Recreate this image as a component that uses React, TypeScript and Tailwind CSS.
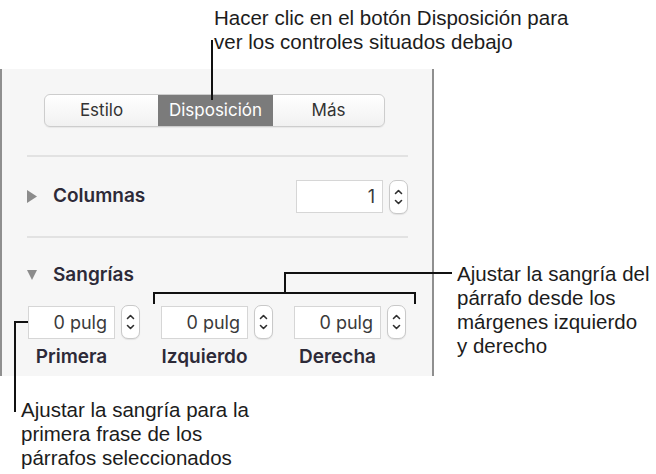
import React from "react";

const callout = "font-['Liberation_Sans',Arial,sans-serif] text-[20.5px] leading-[24px] text-[#1c1c1c]";
const panelFont = "font-['Inter','Noto_Sans',sans-serif]";

function Stepper() {
  return (
    <div className="flex h-[34px] w-[19px] items-center justify-center rounded-[7px] border border-[#c9c9c9] bg-white shadow-[0_1px_1px_rgba(0,0,0,0.08)]">
      <svg width="11" height="22" viewBox="0 0 11 22" fill="none" stroke="#2f2f2f" strokeWidth="1.6" strokeLinecap="round" strokeLinejoin="round">
        <path d="M2.5 7.5 5.5 4.5 8.5 7.5" />
        <path d="M2.5 14.5 5.5 17.5 8.5 14.5" />
      </svg>
    </div>
  );
}

function NumberField({ value, width = "w-[87px]" }: { value: string; width?: string }) {
  return (
    <div className={`flex h-[33px] ${width} items-center justify-end border border-[#d6d6d6] bg-white pr-[7px] text-[18px] text-[#3a3a3a]`}>
      {value}
    </div>
  );
}

function Triangle({ open }: { open?: boolean }) {
  return open ? (
    <svg width="10" height="10" viewBox="0 0 10 10">
      <path d="M0 0h10L5 10z" fill="#8c8c8c" />
    </svg>
  ) : (
    <svg width="10" height="13" viewBox="0 0 10 13">
      <path d="M0 0v13l10-6.5z" fill="#8c8c8c" />
    </svg>
  );
}

function IndentField({ label }: { label: string }) {
  return (
    <div className="flex flex-col">
      <div className="flex items-center gap-[6px]">
        <NumberField value="0 pulg" />
        <Stepper />
      </div>
      <div className="mt-[6px] w-[87px] text-center text-[19px] font-semibold leading-[24px] text-[#2d2a38]">{label}</div>
    </div>
  );
}

export default function App() {
  return (
    <div className="relative h-[474px] w-[656px] overflow-hidden bg-white">
      <div className={`${callout} pl-[214px] pt-[6px]`}>
        Hacer clic en el botón Disposición para
        <br />
        ver los controles situados debajo
      </div>

      <section className={`${panelFont} mt-[15px] flex h-[307px] w-[434px] flex-col border-x-2 border-x-[#8f8f8f] bg-[#f6f6f6] pt-[25px]`}>
        <div className="ml-[42px] flex h-[33px] w-[341px] overflow-hidden rounded-[6px] border border-[#cdcdcd] bg-gradient-to-b from-white to-[#f1f1f1] text-[17px] text-[#333] shadow-[0_1px_1px_rgba(0,0,0,0.06)]">
          <div className="flex w-[113px] items-center justify-center">Estilo</div>
          <div className="flex w-[115px] items-center justify-center bg-[#7b7b7b] text-white">Disposición</div>
          <div className="flex flex-1 items-center justify-center">Más</div>
        </div>

        <div className="ml-[25px] mt-[28px] h-[2px] w-[381px] bg-[#e2e2e2]" />

        <div className="ml-[25px] mt-[22px] flex h-[35px] w-[381px] items-center">
          <Triangle />
          <span className="ml-[16px] text-[19px] font-semibold text-[#2d2a38]">Columnas</span>
          <div className="ml-auto flex items-center gap-[6px]">
            <NumberField value="1" />
            <Stepper />
          </div>
        </div>

        <div className="ml-[25px] mt-[22px] h-[2px] w-[381px] bg-[#e2e2e2]" />

        <div className="ml-[25px] mt-[25px] flex h-[24px] items-center">
          <Triangle open />
          <span className="ml-[16px] text-[19px] font-semibold text-[#2d2a38]">Sangrías</span>
        </div>

        <div className="ml-[26px] mt-[18px] flex gap-[21px]">
          <IndentField label="Primera" />
          <IndentField label="Izquierdo" />
          <IndentField label="Derecha" />
        </div>
      </section>

      <div className={`${callout} absolute left-[457px] top-[262px]`}>
        Ajustar la sangría del
        <br />
        párrafo desde los
        <br />
        márgenes izquierdo
        <br />y derecho
      </div>

      <div className={`${callout} absolute left-[21px] top-[398px]`}>
        Ajustar la sangría para la
        <br />
        primera frase de los
        <br />
        párrafos seleccionados
      </div>

      <svg className="pointer-events-none absolute left-0 top-0" width="656" height="474" fill="none" stroke="#111" strokeWidth="2">
        <path d="M212 40V100" />
        <path d="M452 273H285V293" />
        <path d="M154 304V293H415V304" />
        <path d="M28 322H15V412" />
      </svg>
    </div>
  );
}
